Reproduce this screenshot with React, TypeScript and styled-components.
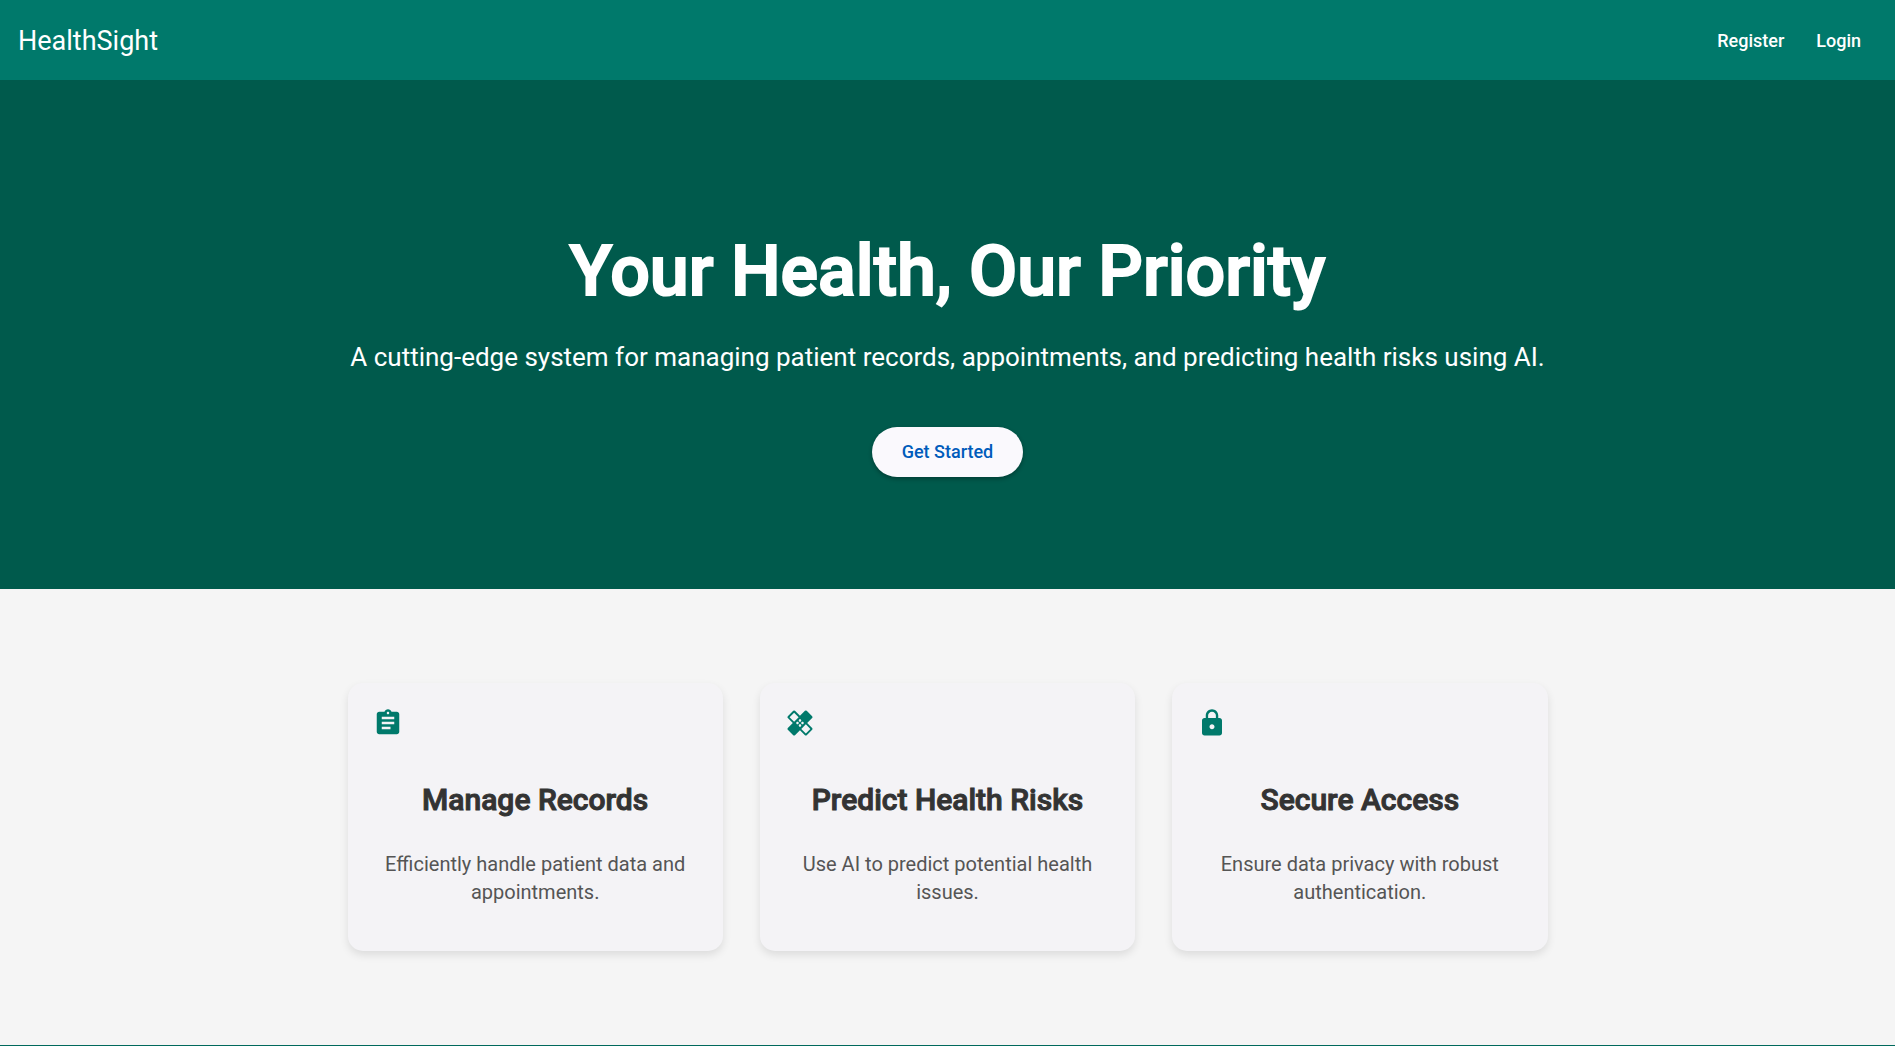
import React from "react";
import styled, { createGlobalStyle } from "styled-components";
import { MdAssignment, MdHealing, MdLock } from "react-icons/md";

const GlobalStyle = createGlobalStyle`
  *, *::before, *::after { box-sizing: border-box; }
  body {
    margin: 0;
    background: #f5f5f5;
    font-family: Roboto, "Liberation Sans", sans-serif;
  }
`;

const Page = styled.div`
  display: flex;
  flex-direction: column;
  min-height: 100vh;
`;

const Toolbar = styled.header`
  display: flex;
  align-items: center;
  justify-content: space-between;
  height: 80px;
  padding: 2px 18px 0;
  background: #00796b;
  color: #fff;
`;

const Brand = styled.span`
  font-size: 27px;
  line-height: 36px;
`;

const Nav = styled.nav`
  display: flex;
`;

const NavLink = styled.a`
  padding: 8px 16px;
  color: #fff;
  font-size: 18px;
  line-height: 24px;
  font-weight: 500;
  text-decoration: none;
`;

const Hero = styled.section`
  display: flex;
  flex-direction: column;
  align-items: center;
  padding: 147px 32px 112px;
  background: #005a4c;
  color: #fff;
  text-align: center;
`;

const HeroTitle = styled.h1`
  margin: 0 0 22px;
  font-size: 70px;
  line-height: 88px;
  font-weight: 500;
  -webkit-text-stroke: 2px currentColor;
`;

const HeroText = styled.p`
  margin: 0 0 50px;
  font-size: 26px;
  line-height: 40px;
`;

const StartButton = styled.button`
  height: 50px;
  padding: 0 30px;
  border: 0;
  border-radius: 25px;
  background: #faf9fd;
  color: #005cbb;
  font: 500 18px/24px Roboto, "Liberation Sans", sans-serif;
  box-shadow: 0 2px 4px rgba(0, 0, 0, 0.3);
`;

const Features = styled.section`
  display: grid;
  grid-template-columns: repeat(3, minmax(0, 1fr));
  gap: 37px;
  max-width: 1200px;
  margin: 0 auto;
  padding: 94px 0;
`;

const Card = styled.article`
  padding: 25px;
  border-radius: 15px;
  background: #f4f3f6;
  box-shadow: 0 4px 8px rgba(0, 0, 0, 0.1);
  text-align: center;
  svg { display: block; color: #00796b; }
`;

const CardTitle = styled.h2`
  margin: 42px 0 30px;
  color: #333;
  font-size: 30px;
  line-height: 40px;
  font-weight: 500;
  -webkit-text-stroke: 1px currentColor;
`;

const CardText = styled.p`
  margin: 0 0 20px;
  color: #555;
  font-size: 20px;
  line-height: 28px;
`;

const Footer = styled.footer`
  flex: 1 0 1px;
  background: #00695c;
`;

const features = [
  { icon: MdAssignment, title: "Manage Records", text: "Efficiently handle patient data and appointments." },
  { icon: MdHealing, title: "Predict Health Risks", text: "Use AI to predict potential health issues." },
  { icon: MdLock, title: "Secure Access", text: "Ensure data privacy with robust authentication." },
];

export default function App() {
  return (
    <>
      <GlobalStyle />
      <Page>
        <Toolbar>
          <Brand>HealthSight</Brand>
          <Nav>
            <NavLink href="#register">Register</NavLink>
            <NavLink href="#login">Login</NavLink>
          </Nav>
        </Toolbar>
        <main>
          <Hero>
            <HeroTitle>Your Health, Our Priority</HeroTitle>
            <HeroText>
              A cutting-edge system for managing patient records, appointments, and predicting health risks using AI.
            </HeroText>
            <StartButton type="button">Get Started</StartButton>
          </Hero>
          <Features>
            {features.map(({ icon: Icon, title, text }) => (
              <Card key={title}>
                <Icon size={30} aria-hidden="true" />
                <CardTitle>{title}</CardTitle>
                <CardText>{text}</CardText>
              </Card>
            ))}
          </Features>
        </main>
        <Footer />
      </Page>
    </>
  );
}
